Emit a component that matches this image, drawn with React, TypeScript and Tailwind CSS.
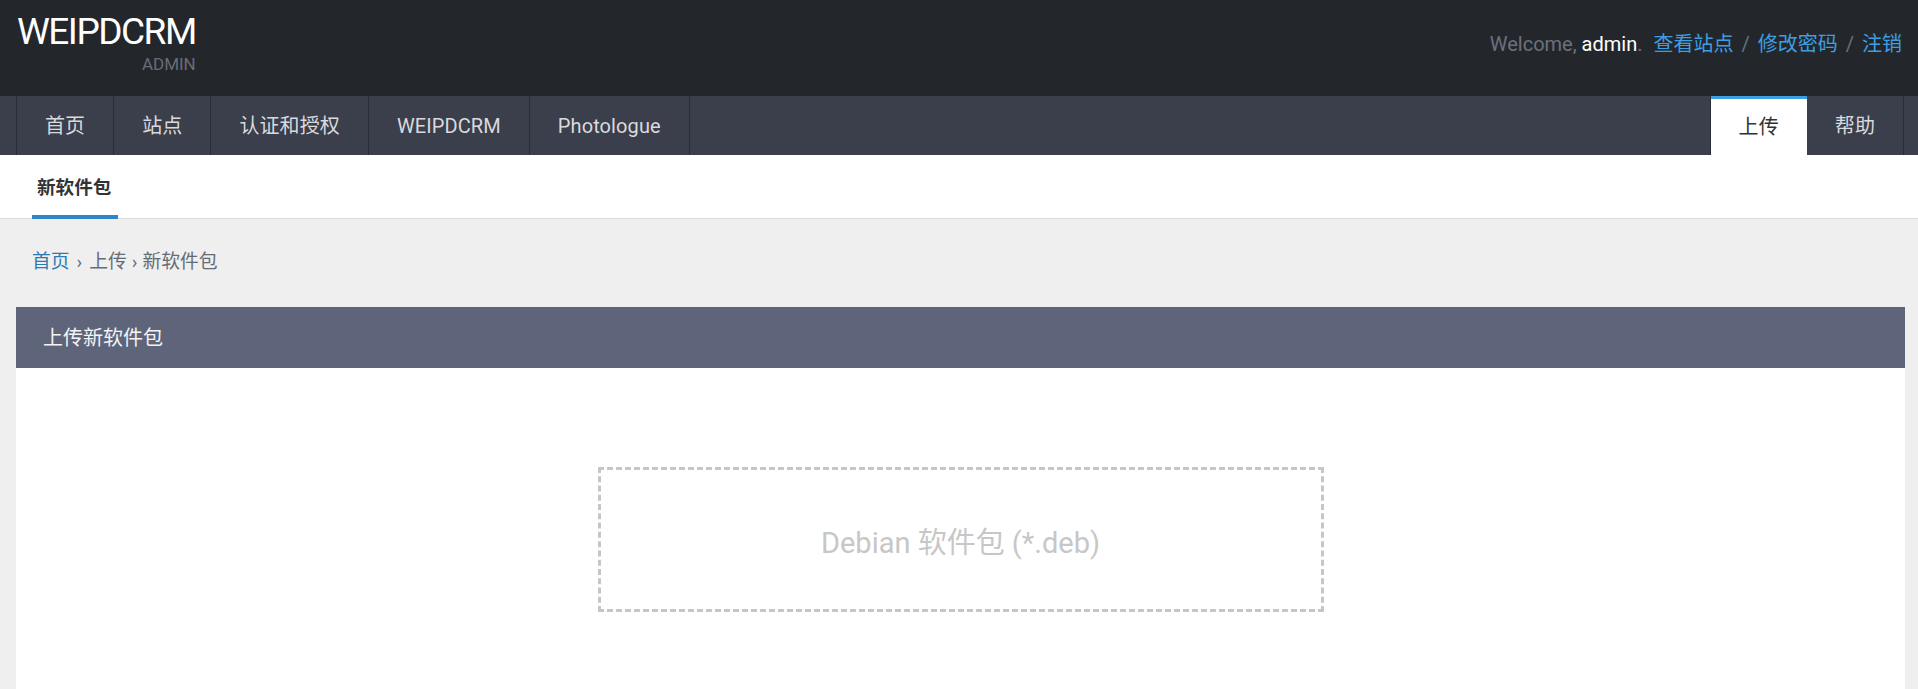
import React from 'react'

const font = { fontFamily: 'Roboto, "Noto Sans CJK SC", sans-serif' }

const leftTabs = ['首页', '站点', '认证和授权', 'WEIPDCRM', 'Photologue']

function Header() {
  return (
    <header className="h-[96px] bg-[#23272c] flex items-start justify-between pl-[17px] pr-[16px]">
      <div className="inline-flex flex-col items-end pt-[10px]">
        <h1 className="text-[37px] leading-[44px] tracking-[-1.5px] text-white">WEIPDCRM</h1>
        <span className="text-[17px] leading-[20px] text-[#676c77]">ADMIN</span>
      </div>
      <div className="pt-[32px] text-[20px] leading-[24px] text-[#6b717c]">
        Welcome, <span className="text-white">admin</span>.{' '}
        <a className="ml-[6px] text-[#3d9fe0]">查看站点</a>
        <span className="mx-[8px]">/</span>
        <a className="text-[#3d9fe0]">修改密码</a>
        <span className="mx-[8px]">/</span>
        <a className="text-[#3d9fe0]">注销</a>
      </div>
    </header>
  )
}

function NavBar() {
  return (
    <nav className="h-[59px] bg-[#3b3e4b] flex justify-between pl-[16px] pr-[14px] text-[20px] tracking-[0.1px] text-[#d9dadd]">
      <ul className="flex border-l border-[#2a2d35]">
        {leftTabs.map(t => (
          <li key={t} className="flex items-center px-7 border-r border-[#2a2d35]">
            {t}
          </li>
        ))}
      </ul>
      <ul className="flex border-l border-[#2a2d35]">
        <li className="flex items-center px-7 bg-white text-[#333] border-t-[3px] border-[#3d9fe0]">上传</li>
        <li className="flex items-center px-7 border-r border-[#2a2d35]">帮助</li>
      </ul>
    </nav>
  )
}

export default function App() {
  return (
    <div className="min-h-screen bg-[#efefef]" style={font}>
      <Header />
      <NavBar />

      <div className="h-[64px] bg-white border-b border-[#dcdcdc] flex items-end pl-[32px]">
        <div className="-mb-px pl-[5px] pr-[7px] pt-[21px] pb-[15px] text-[18.6px] leading-[24px] font-bold text-[#333] border-b-4 border-[#2c86c9]">
          新软件包
        </div>
      </div>

      <div className="pl-[16px] pr-[13px]">
        <div className="pl-[16px] pt-[31px] pb-[33px] text-[18.8px] leading-[24px] text-[#666c75]">
          <a className="text-[#2b7bb0]">首页</a>
          <span className="mx-[7px]">›</span>
          <span>上传</span>
          <span className="mx-[5px]">›</span>
          <span>新软件包</span>
        </div>

        <div className="bg-white">
          <div className="h-[61px] bg-[#5e6479] flex items-center pl-[27px] text-[20px] text-[#f3f3f5]">
            上传新软件包
          </div>
          <div className="pt-[99px] pb-[120px] flex justify-center">
            <div className="w-[726px] h-[145px] pt-[9px] border-[3px] border-dashed border-[#c6c6c6] flex items-center justify-center text-[29px] text-[#c7c7c7]">
              Debian 软件包 (*.deb)
            </div>
          </div>
        </div>
      </div>
    </div>
  )
}
